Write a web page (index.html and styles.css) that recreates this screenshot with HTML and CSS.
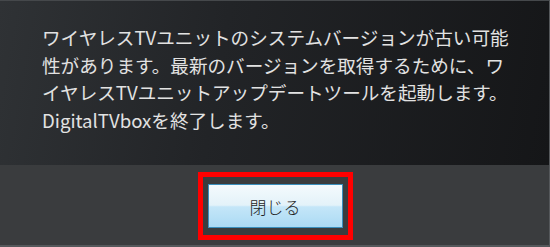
FILE: index.html
```html
<!DOCTYPE html>
<html lang="ja">
<head>
<meta charset="utf-8">
<link rel="stylesheet" href="styles.css">
</head>
<body>
<div class="dialog">
  <div class="message">
    <p class="text">ワイヤレスTVユニットのシステムバージョンが古い可能<br>性があります。最新のバージョンを取得するために、ワ<br>イヤレスTVユニットアップデートツールを起動します。<br>DigitalTVboxを終了します。</p>
  </div>
  <div class="footer">
    <div class="highlight">
      <button class="btn">閉じる</button>
    </div>
  </div>
</div>
</body>
</html>
```
FILE: styles.css
```css
html, body {
  margin: 0;
  padding: 0;
  background: #3b3d3f;
}
.dialog {
  width: 550px;
  height: 247px;
  display: flex;
  flex-direction: column;
  box-sizing: border-box;
  border-right: 1px solid #55585b;
  border-bottom: 2px solid #55585b;
  border-top: 1px solid #45484b;
  font-family: "Noto Sans CJK JP", "Noto Sans", sans-serif;
}
.message {
  height: 164px;
  background: linear-gradient(100deg, #2f3235 0%, #222427 40%, #151618 100%);
  padding: 22px 0 0 42px;
  box-sizing: border-box;
}
.text {
  margin: 0;
  color: #e2e2e2;
  font-size: 18.6px;
  line-height: 27.6px;
  white-space: nowrap;
}
.footer {
  flex: 1;
  background: #3a3c3e;
  display: flex;
  justify-content: center;
  padding-top: 7px;
  padding-left: 1px;
}
.highlight {
  width: 155px;
  height: 68px;
  box-sizing: border-box;
  border: 5px solid #ff0000;
  padding: 7px 5px;
  display: flex;
}
.btn {
  flex: 1;
  margin: 0;
  border: 1px solid #3a8fbd;
  background: linear-gradient(to bottom, #f4fafd 0%, #e3f2f9 48%, #c4e6f8 52%, #abdaf4 100%);
  font-family: "Noto Sans CJK JP", sans-serif;
  font-size: 17px;
  font-weight: 300;
  color: #1e1e1e;
  padding: 0;
}
```
